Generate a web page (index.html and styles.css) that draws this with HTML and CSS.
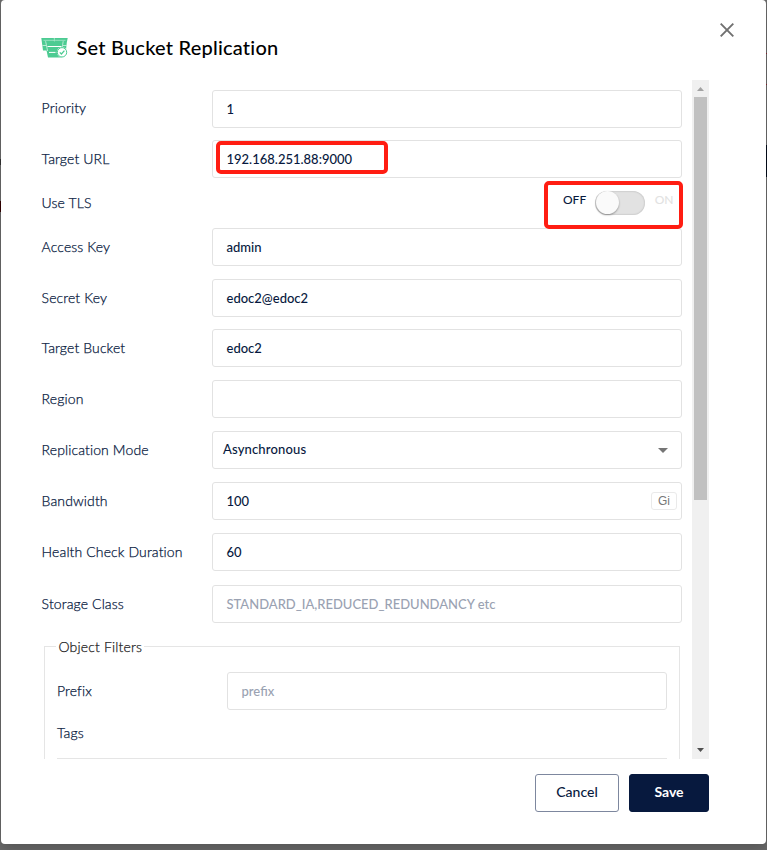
FILE: index.html
```html
<!DOCTYPE html>
<html lang="en">
<head>
<meta charset="utf-8">
<title>Set Bucket Replication</title>
<link rel="stylesheet" href="styles.css">
</head>
<body>
<div class="modal">
  <header class="header">
    <svg class="bucket-icon" viewBox="0 0 27 20" width="27" height="20">
      <path fill="#4ccb92" d="M.3 0H26.700L25.800 4.500L25 12H22L20.800 19.500H7L5.500 12.500H2Z"/>
      <g fill="none" stroke="#fff">
        <path d="M2.500 2.300H12.300L13.300 3L14.300 2.300H24.500" stroke-width=".6" opacity=".7"/>
        <path d="M13.300 0V2.800" stroke-width=".5"/>
        <path d="M4.600 3.200L6.600 13M22.200 3.200L21.300 9" stroke-width=".6"/>
        <path d="M1.500 7.500H5M22 7.500H25.500" stroke-width=".6"/>
        <path d="M6.500 8.500H20.500M8 14.400H14.500" stroke-width="1"/>
      </g>
      <circle cx="21" cy="14.300" r="5.200" fill="#fff"/>
      <circle cx="21" cy="14.300" r="4.700" fill="#fff" stroke="#4ccb92" stroke-width="1"/>
      <path d="M18.800 14.400L20.400 16L23.400 12.600" fill="none" stroke="#4ccb92" stroke-width="1.300"/>
    </svg>
    <h1 class="title">Set Bucket Replication</h1>
    <button class="close" aria-label="Close">
      <svg width="14" height="14" viewBox="0 0 14 14"><path d="M.7.7L13.300 13.300M13.300.7L.7 13.300" fill="none" stroke="#707070" stroke-width="1.900"/></svg>
    </button>
  </header>
  <div class="body">
    <div class="form">
      <div class="row"><span class="label">Priority</span><div class="field">1</div></div>
      <div class="row"><span class="label">Target URL</span><div class="field marked-field">192.168.251.88:9000<span class="mark mark-url"></span></div></div>
      <div class="row toggle-row"><span class="label">Use TLS</span>
        <div class="switch-group"><span class="off">OFF</span><span class="track"><span class="knob"></span></span><span class="on">ON</span><span class="mark mark-tls"></span></div>
      </div>
      <div class="row"><span class="label">Access Key</span><div class="field">admin</div></div>
      <div class="row"><span class="label">Secret Key</span><div class="field">edoc2@edoc2</div></div>
      <div class="row"><span class="label">Target Bucket</span><div class="field">edoc2</div></div>
      <div class="row"><span class="label">Region</span><div class="field"></div></div>
      <div class="row"><span class="label">Replication Mode</span><div class="field select"><span>Asynchronous</span><svg width="10" height="5" viewBox="0 0 10 5"><path d="M0 0H10L5 5Z" fill="#757575"/></svg></div></div>
      <div class="row"><span class="label">Bandwidth</span><div class="field unit-field"><span>100</span><span class="unit">Gi</span></div></div>
      <div class="row"><span class="label">Health Check Duration</span><div class="field">60</div></div>
      <div class="row"><span class="label">Storage Class</span><div class="field placeholder">STANDARD_IA,REDUCED_REDUNDANCY etc</div></div>
      <fieldset class="filters">
        <legend class="legend">Object Filters</legend>
        <div class="row"><span class="label">Prefix</span><div class="field placeholder">prefix</div></div>
        <div class="tags"><span class="label">Tags</span></div>
      </fieldset>
    </div>
    <div class="scrollbar">
      <svg class="arrow" width="7" height="4" viewBox="0 0 7 4"><path d="M0 4L3.500 0L7 4Z" fill="#a3a3a3"/></svg>
      <span class="thumb"></span>
      <svg class="arrow arrow-down" width="7" height="4" viewBox="0 0 7 4"><path d="M0 0H7L3.500 4Z" fill="#505050"/></svg>
    </div>
  </div>
  <footer class="footer"><button class="btn cancel">Cancel</button><button class="btn save">Save</button></footer>
</div>
</body>
</html>
```
FILE: styles.css
```css
* { box-sizing: border-box; }
body {
  margin: 0;
  height: 850px;
  padding: 0 1px;
  overflow: hidden;
  font: 14px/20px Lato, sans-serif;
  color: #07193e;
  background:
    linear-gradient(#300 0 0) 0 201px / 1px 11px no-repeat,
    linear-gradient(#333 0 0) 0 159px / 1px 6px no-repeat,
    linear-gradient(#8b2630 0 0) 100% 53px / 1px 1px no-repeat,
    linear-gradient(#8b2630 0 0) 100% 84px / 1px 1px no-repeat,
    linear-gradient(#030a19 0 0) 100% 145px / 1px 32px no-repeat,
    #6b6b6b;
}
.modal {
  height: 844px;
  background: #fff;
  border-radius: 4px;
  box-shadow: 0 6px 14px rgba(0, 0, 0, .2);
  display: flex;
  flex-direction: column;
}
.header {
  height: 80px;
  flex: none;
  display: flex;
  align-items: flex-start;
  padding: 0 32px 0 40px;
}
.bucket-icon { margin-top: 38px; }
.title {
  margin: 34px auto 0 8.5px;
  font-size: 20px;
  line-height: 26px;
  font-weight: 500;
  letter-spacing: .21px;
  color: #000;
}
.close {
  margin: 23px 0 0;
  padding: 0;
  border: 0;
  background: none;
  width: 14px;
  height: 14px;
  display: block;
}
.close svg { display: block; }
.body {
  height: 679px;
  flex: none;
  display: flex;
  padding: 0 57px 0 40px;
}
.form {
  flex: 1;
  height: 679px;
  overflow: hidden;
  padding: 10px 10px 0 0;
  display: grid;
  grid-template-rows: 50px 38px 50px 51px 50px 51px 51px 51px 51px 52px 38px auto;
  align-content: start;
}
.row {
  display: flex;
  align-items: flex-start;
}
.label {
  width: 171px;
  padding: 9px 0 0 .6px;
  flex: none;
  font-weight: 300;
  letter-spacing: .12px;
  -webkit-text-stroke: .25px currentColor;
}
.row:first-child .label { padding-top: 8px; }
.toggle-row .label { padding-top: 15px; }
.field {
  flex: 1;
  height: 38px;
  border: 1px solid #e2e2e2;
  border-radius: 3px;
  padding: 0 13.5px;
  line-height: 37px;
  font-size: 13px;
  font-weight: 500;
}
.placeholder { color: #9aa2b2; }
.marked-field { position: relative; }
.mark {
  position: absolute;
  border: 4px solid #ff1d12;
  border-radius: 5px;
}
.mark-url { left: 3px; top: 0; width: 172px; height: 33px; }
.switch-group {
  position: relative;
  margin: 13px 8.5px 0 auto;
  display: flex;
  font-size: 12px;
  line-height: 18px;
  font-weight: 500;
}
.mark-tls { left: -19px; top: -10px; width: 139px; height: 47.5px; }
.track {
  width: 50px;
  height: 24px;
  margin: 0 9.5px 0 9px;
  border-radius: 12px;
  background: #e2e2e2;
  box-shadow: inset 0 0 2px rgba(0, 0, 0, .25);
}
.knob {
  display: block;
  width: 23px;
  height: 23px;
  margin: 0 1px;
  border-radius: 50%;
  background: #fafafa;
  box-shadow: 0 1px 2px rgba(0, 0, 0, .35);
}
.on { color: #e2e2e2; }
.select {
  display: flex;
  align-items: center;
  justify-content: space-between;
  padding: 0 13px 0 10px;
  line-height: 35px;
  letter-spacing: .15px;
}
.select span { padding-bottom: 1px; }
.unit-field {
  display: flex;
  align-items: center;
  justify-content: space-between;
  padding-right: 4px;
}
.unit {
  width: 26px;
  height: 18px;
  border: 1px solid #eaeaea;
  border-radius: 3px;
  text-align: center;
  font: 12px/17px "Liberation Sans", sans-serif;
  color: #777;
}
.filters {
  margin: 12px 2px 0 3px;
  padding: 15px 12px 0;
  border: 1px solid #e5e5e5;
  border-bottom: 0;
  height: 150px;
  min-width: 0;
}
.legend {
  margin-left: -1px;
  padding: 2px 2px 0 2.5px;
  font-weight: 300;
  letter-spacing: .17px;
  -webkit-text-stroke: .25px currentColor;
  color: #222;
}
.filters .row { height: 38px; }
.filters .row .label { width: 170px; padding: 9px 0 0; }
.tags {
  height: 49px;
  padding-top: 13px;
  border-bottom: 1px solid #e5e5e5;
}
.tags .label { padding: 0; }
.scrollbar {
  width: 17px;
  height: 679px;
  background: #f0f0f0;
  display: flex;
  flex-direction: column;
  align-items: center;
}
.arrow { margin: 7px 0 6px; flex: none; }
.thumb { width: 13px; height: 403px; background: #c1c1c1; }
.arrow-down { margin: auto 0 7px; }
.footer {
  display: flex;
  justify-content: flex-end;
  gap: 10px;
  padding: 15px 57px 0 0;
}
.btn {
  height: 38px;
  padding: 0 0 3px;
  border-radius: 3px;
  font: 500 14px/33px Lato, sans-serif;
}
.cancel { width: 84px; background: #fff; color: #07193e; border: 1px solid #7d879e; }
.save { width: 80px; background: #07193e; color: #fff; border: 1px solid #07193e; font-weight: 700; }
```
